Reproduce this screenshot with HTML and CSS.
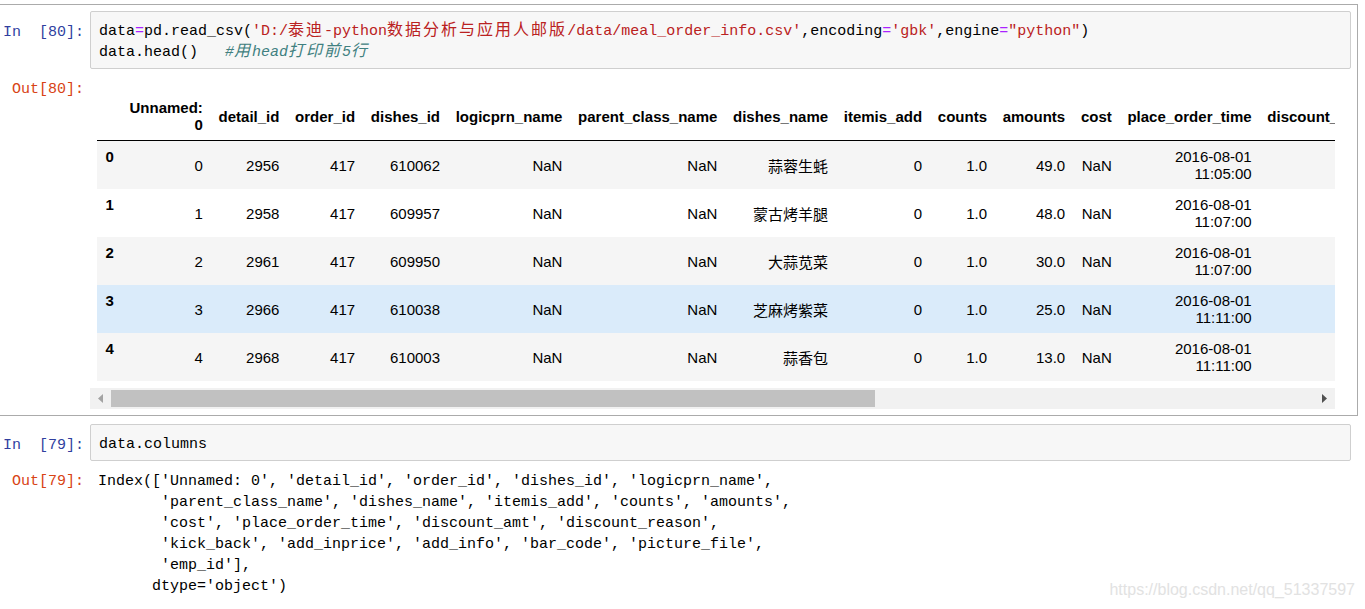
FILE: index.html
```html
<!DOCTYPE html>
<html lang="zh">
<head>
<meta charset="utf-8">
<title>Notebook</title>
<link rel="stylesheet" href="styles.css">
</head>
<body>
<div class="nb">
  <div class="cell selected">
    <div class="row">
      <div class="prompt in">In&nbsp;&nbsp;[80]:</div>
      <div class="code">
        <div class="line">data<span class="o">=</span>pd.read_csv(<span class="s">'D:/<span class="cjk">泰迪</span>-python<span class="cjk">数据分析与应用人邮版</span>/data/meal_order_info.csv'</span>,encoding<span class="o">=</span><span class="s">'gbk'</span>,engine<span class="o">=</span><span class="s">"python"</span>)</div>
        <div class="line">data.head()   <span class="c">#<span class="cjk">用</span>head<span class="cjk">打印前</span>5<span class="cjk">行</span></span></div>
      </div>
    </div>
    <div class="row out-row">
      <div class="prompt out">Out[80]:</div>
      <div class="out-sub">
        <div class="tablewrap">
          <table class="df">
            <thead>
              <tr>
                <th></th><th>Unnamed: 0</th><th>detail_id</th><th>order_id</th><th>dishes_id</th><th>logicprn_name</th><th>parent_class_name</th><th>dishes_name</th><th>itemis_add</th><th>counts</th><th>amounts</th><th>cost</th><th>place_order_time</th><th>discount_amt</th><th>discount_reason</th><th>kick_back</th><th>add_inprice</th><th>add_info</th><th>bar_code</th><th>picture_file</th><th>emp_id</th>
              </tr>
            </thead>
            <tbody>
              <tr>
                <th>0</th><td>0</td><td>2956</td><td>417</td><td>610062</td><td>NaN</td><td>NaN</td><td class="zh">蒜蓉生蚝</td><td>0</td><td>1.0</td><td>49.0</td><td>NaN</td><td>2016-08-01 11:05:00</td><td>NaN</td><td>NaN</td><td>NaN</td><td>0</td><td>NaN</td><td>NaN</td><td>caipu/104001.jpg</td><td>1442</td>
              </tr>
              <tr>
                <th>1</th><td>1</td><td>2958</td><td>417</td><td>609957</td><td>NaN</td><td>NaN</td><td class="zh">蒙古烤羊腿</td><td>0</td><td>1.0</td><td>48.0</td><td>NaN</td><td>2016-08-01 11:07:00</td><td>NaN</td><td>NaN</td><td>NaN</td><td>0</td><td>NaN</td><td>NaN</td><td>caipu/202003.jpg</td><td>1442</td>
              </tr>
              <tr>
                <th>2</th><td>2</td><td>2961</td><td>417</td><td>609950</td><td>NaN</td><td>NaN</td><td class="zh">大蒜苋菜</td><td>0</td><td>1.0</td><td>30.0</td><td>NaN</td><td>2016-08-01 11:07:00</td><td>NaN</td><td>NaN</td><td>NaN</td><td>0</td><td>NaN</td><td>NaN</td><td>caipu/303001.jpg</td><td>1442</td>
              </tr>
              <tr class="hover">
                <th>3</th><td>3</td><td>2966</td><td>417</td><td>610038</td><td>NaN</td><td>NaN</td><td class="zh">芝麻烤紫菜</td><td>0</td><td>1.0</td><td>25.0</td><td>NaN</td><td>2016-08-01 11:11:00</td><td>NaN</td><td>NaN</td><td>NaN</td><td>0</td><td>NaN</td><td>NaN</td><td>caipu/105002.jpg</td><td>1442</td>
              </tr>
              <tr>
                <th>4</th><td>4</td><td>2968</td><td>417</td><td>610003</td><td>NaN</td><td>NaN</td><td class="zh">蒜香包</td><td>0</td><td>1.0</td><td>13.0</td><td>NaN</td><td>2016-08-01 11:11:00</td><td>NaN</td><td>NaN</td><td>NaN</td><td>0</td><td>NaN</td><td>NaN</td><td>caipu/503002.jpg</td><td>1442</td>
              </tr>
            </tbody>
          </table>
        </div>
        <div class="hscroll">
          <div class="sbtn">
            <svg width="5" height="9" viewBox="0 0 5 9"><path d="M5 0 L0 4.5 L5 9 Z" fill="#a3a3a3"/></svg>
          </div>
          <div class="strack"><div class="thumb"></div></div>
          <div class="sbtn">
            <svg width="5" height="9" viewBox="0 0 5 9"><path d="M0 0 L5 4.5 L0 9 Z" fill="#505050"/></svg>
          </div>
        </div>
      </div>
    </div>
  </div>

  <div class="cell plain">
    <div class="row">
      <div class="prompt in">In&nbsp;&nbsp;[79]:</div>
      <div class="code">
        <div class="line">data.columns</div>
      </div>
    </div>
    <div class="row out-row">
      <div class="prompt out">Out[79]:</div>
      <div class="text-out">
        <div class="line">Index(['Unnamed: 0', 'detail_id', 'order_id', 'dishes_id', 'logicprn_name',</div>
        <div class="line">       'parent_class_name', 'dishes_name', 'itemis_add', 'counts', 'amounts',</div>
        <div class="line">       'cost', 'place_order_time', 'discount_amt', 'discount_reason',</div>
        <div class="line">       'kick_back', 'add_inprice', 'add_info', 'bar_code', 'picture_file',</div>
        <div class="line">       'emp_id'],</div>
        <div class="line">      dtype='object')</div>
      </div>
    </div>
  </div>

  <div class="watermark">https://blog.csdn.net/qq_51337597</div>
</div>
</body>
</html>
```

FILE: styles.css
```css
html, body {
  margin: 0;
  padding: 0;
  background: #ffffff;
}

.nb {
  position: relative;
  width: 1365px;
  height: 609px;
  overflow: hidden;
  font-family: "Liberation Mono", "Noto Sans CJK SC", monospace;
  font-size: 15px;
  color: #000;
}

.cell {
  margin: 4px 7px 0 -1px;
  border: 1px solid #ababab;
  padding: 6px 6px 6px 1px;
}

.cell.plain {
  margin-top: 1px;
  border-color: transparent;
}

.row {
  display: flex;
  align-items: flex-start;
}

.out-row {
  margin-top: 8px;
}

.prompt {
  width: 83px;
  flex: none;
  text-align: right;
  white-space: pre;
  line-height: 21px;
  font-family: "Liberation Mono", monospace;
  font-size: 15px;
}

.prompt.in {
  color: #303F9F;
  padding-top: 11px;
}

.prompt.out {
  color: #D84315;
  padding-top: 2px;
}

.code {
  flex: 1;
  margin-left: 6px;
  background: #f7f7f7;
  border: 1px solid #cfcfcf;
  border-radius: 2px;
  padding: 9px 8px 5px;
}

.line {
  white-space: pre;
  line-height: 21px;
  height: 21px;
}

.cjk {
  font-family: "Noto Sans CJK SC", sans-serif;
  font-size: 16px;
  line-height: 15px;
  letter-spacing: 2px;
}

.o { color: #AA22FF; }
.s { color: #BA2121; }
.c { color: #408080; font-style: italic; }

.out-sub {
  margin-left: 6px;
  width: 1245px;
  flex: none;
}

.tablewrap {
  overflow: hidden;
  padding: 14px 0 7px 7px;
}

.df {
  border-collapse: collapse;
  border: none;
  font-family: "Liberation Sans", Arial, "Noto Sans CJK SC", sans-serif;
  font-size: 15px;
  line-height: 17px;
  color: #000;
}

.df th,
.df td {
  padding: 7px 7.85px;
  text-align: right;
  vertical-align: middle;
  border: none;
}

.df thead {
  border-bottom: 1px solid #000;
}

.df thead th {
  font-weight: bold;
  padding-top: 8px;
}

.df tbody th {
  font-weight: bold;
  text-align: left;
  vertical-align: top;
  padding-left: 8.5px;
}

.df tbody tr:nth-child(odd) {
  background: #f5f5f5;
}

.df tbody tr.hover {
  background: #daebfa;
}

.df td.zh {
  font-family: "Noto Sans CJK SC", sans-serif;
}

.hscroll {
  display: flex;
  align-items: stretch;
  height: 21px;
  background: #f1f1f1;
}

.sbtn {
  width: 21px;
  flex: none;
  display: flex;
  align-items: center;
  justify-content: center;
}

.strack {
  flex: 1;
  padding: 2px 0;
}

.thumb {
  width: 764px;
  height: 17px;
  background: #c1c1c1;
}

.text-out {
  margin-left: 14px;
  padding-top: 2px;
}

.watermark {
  position: absolute;
  right: 10px;
  top: 581px;
  font-family: "Liberation Sans", Arial, sans-serif;
  font-size: 16px;
  line-height: 18px;
  color: #e2e2e2;
}
```
